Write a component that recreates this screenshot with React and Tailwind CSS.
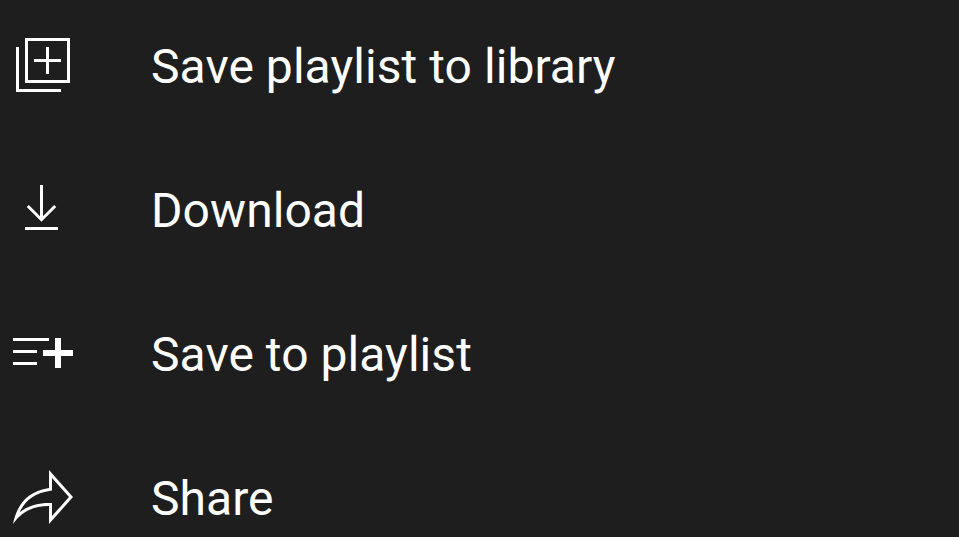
import React from 'react';

function LibraryAddIcon() {
  return (
    <svg viewBox="0 0 72 72" className="size-[72px]" fill="none" stroke="currentColor" strokeWidth="3">
      <rect x="19.5" y="10.5" width="42" height="42" />
      <path d="M10.5 18V61.5H54M27 31.5H54M40.5 18V45" />
    </svg>
  );
}

function DownloadIcon() {
  return (
    <svg viewBox="0 0 72 72" className="size-[72px]" fill="none" stroke="currentColor" strokeWidth="3">
      <path d="M34.5 12V46M20.8 33L34.5 46.7L48.2 33M18 55.5H51" />
    </svg>
  );
}

function PlaylistAddIcon() {
  return (
    <svg viewBox="0 0 72 72" className="size-[72px]" fill="none" stroke="currentColor" strokeWidth="3">
      <path d="M6 22.5H42M6 34.5H30M6 46.5H30" />
      <path d="M36 36H66M51 21V51" strokeWidth="6" />
    </svg>
  );
}

function ShareIcon() {
  return (
    <svg viewBox="0 0 24 24" className="size-[72px]" fill="currentColor" fillRule="evenodd">
      <path d="M15 5.63L20.66 12L15 18.37V14H14C10.04 14 6.86 15 4.25 17.09C6.09 13.02 9.36 10.69 14.14 9.99L15 9.86V5.63ZM14 3V9C6.22 10.13 3.11 15.33 2 21C4.78 17.03 8.44 15 14 15V21L22 12L14 3Z" />
    </svg>
  );
}

const menuItems = [
  { label: 'Save playlist to library', Icon: LibraryAddIcon },
  { label: 'Download', Icon: DownloadIcon },
  { label: 'Save to playlist', Icon: PlaylistAddIcon },
  { label: 'Share', Icon: ShareIcon },
];

function App() {
  return (
    <main className="h-screen overflow-hidden bg-[#1e1e1e] pt-[29px] pl-[7px] font-['Roboto',sans-serif] text-white">
      <ul className="flex flex-col gap-[72px]">
        {menuItems.map(({ label, Icon }) => (
          <li key={label}>
            <button className="flex h-[72px] items-center gap-[72px] text-left">
              <Icon />
              <span className="pt-1 text-[48px] leading-[72px] tracking-[0.06px] whitespace-nowrap">{label}</span>
            </button>
          </li>
        ))}
      </ul>
    </main>
  );
}

export default App;
